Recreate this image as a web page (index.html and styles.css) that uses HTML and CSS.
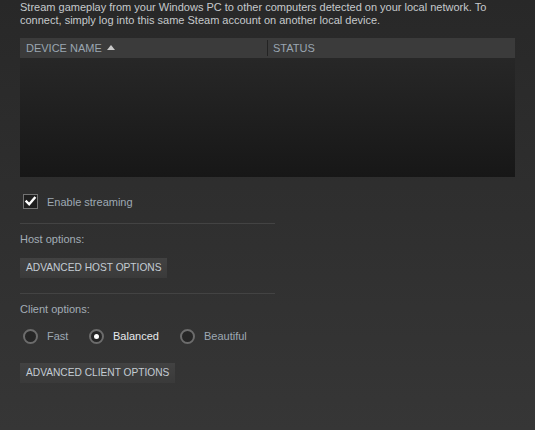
FILE: index.html
```html
<!DOCTYPE html>
<html>
<head>
<meta charset="utf-8">
<link rel="stylesheet" href="styles.css">
</head>
<body>
<div class="page">
  <p class="desc">Stream gameplay from your Windows PC to other computers detected on your local network. To connect, simply log into this same Steam account on another local device.</p>
  <div class="table">
    <div class="thead">
      <div class="th th-name">DEVICE NAME <span class="sort"></span></div>
      <div class="th th-status">STATUS</div>
    </div>
    <div class="tbody"></div>
  </div>
  <label class="check-row">
    <span class="checkbox">
      <svg width="13" height="13" viewBox="0 0 13 13"><path d="M2.5 6.5 L5.2 9.3 L10.6 3" fill="none" stroke="#ffffff" stroke-width="2.4" stroke-linecap="square"/></svg>
    </span>
    <span class="check-label">Enable streaming</span>
  </label>
  <div class="rule"></div>
  <div class="section-label">Host options:</div>
  <button class="btn">ADVANCED HOST OPTIONS</button>
  <div class="rule rule2"></div>
  <div class="section-label">Client options:</div>
  <div class="radios">
    <div class="radio-item"><span class="radio"></span><span class="radio-label">Fast</span></div>
    <div class="radio-item selected"><span class="radio"></span><span class="radio-label">Balanced</span></div>
    <div class="radio-item"><span class="radio"></span><span class="radio-label">Beautiful</span></div>
  </div>
  <button class="btn">ADVANCED CLIENT OPTIONS</button>
</div>
</body>
</html>
```

FILE: styles.css
```css
html, body {
  margin: 0;
  padding: 0;
  height: 100%;
}
body {
  background: linear-gradient(to bottom, #282828 0%, #363636 100%);
  font-family: Arial, "Liberation Sans", sans-serif;
  font-size: 11px;
  color: #b8bcbf;
  overflow: hidden;
}
.page {
  padding: 1px 20px 0 20px;
}
.desc {
  margin: 0;
  line-height: 13px;
  color: #c6c9cc;
}
.table {
  margin-top: 11px;
  width: 495px;
}
.thead {
  display: flex;
  height: 20px;
  background: #3b3b3b;
  align-items: center;
}
.th {
  color: #9aa6b1;
  font-size: 11px;
  line-height: 20px;
}
.th-name {
  width: 241px;
  padding-left: 6px;
  display: flex;
  align-items: center;
}
.sort {
  display: inline-block;
  width: 0;
  height: 0;
  border-left: 4px solid transparent;
  border-right: 4px solid transparent;
  border-bottom: 5px solid #c8c8c8;
  margin-left: 5px;
  margin-top: -1px;
}
.th-status {
  border-left: 1px solid #232323;
  height: 16px;
  line-height: 16px;
  padding-left: 5px;
}
.tbody {
  height: 119px;
  background: linear-gradient(to bottom, #272727 0%, #171717 100%);
}
.check-row {
  display: flex;
  align-items: center;
  margin-top: 17px;
  margin-left: 3px;
  height: 15px;
}
.checkbox {
  box-sizing: border-box;
  width: 15px;
  height: 15px;
  border: 1px solid #737373;
  background: #1f1f1f;
  display: flex;
  align-items: center;
  justify-content: center;
}
.check-label {
  margin-left: 9px;
  color: #9ea9b3;
}
.rule {
  width: 255px;
  height: 1px;
  background: #434343;
  margin-top: 14px;
}
.rule2 {
  margin-top: 15px;
}
.section-label {
  margin-top: 8px;
  line-height: 14px;
  color: #a3adb6;
}
.btn {
  display: block;
  margin-top: 12px;
  height: 20px;
  padding: 0 6px;
  border: none;
  background: linear-gradient(to bottom, #424242, #3a3a3a);
  color: #c4ccd4;
  font-family: Arial, "Liberation Sans", sans-serif;
  font-size: 10.2px;
  line-height: 20px;
}
.radios {
  display: flex;
  margin-top: 12px;
  margin-left: 3px;
  height: 16px;
  align-items: center;
}
.radio-item {
  display: flex;
  align-items: center;
}
.radio {
  box-sizing: border-box;
  width: 15px;
  height: 15px;
  border-radius: 50%;
  border: 2px solid #6c6c6c;
  background: #262626;
  position: relative;
}
.radio-item.selected .radio::after {
  content: "";
  position: absolute;
  left: 3px;
  top: 3px;
  width: 5px;
  height: 5px;
  border-radius: 50%;
  background: #ffffff;
}
.radio-label {
  margin-left: 9px;
  color: #9ea9b3;
}
.radio-item:nth-child(1) .radio-label { width: 42px; }
.radio-item:nth-child(2) .radio-label { width: 67px; }
.radio-item.selected .radio-label {
  color: #e6e9ec;
}
.radios + .btn {
  margin-top: 19px;
}
```
